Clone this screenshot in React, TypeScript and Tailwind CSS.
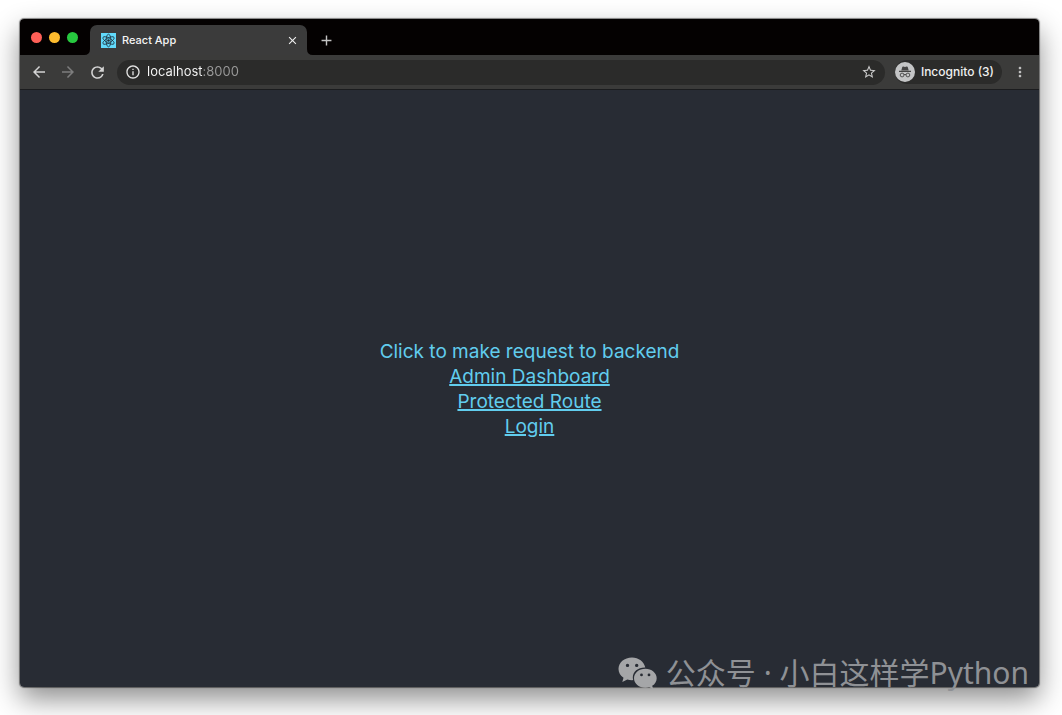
import type { ReactNode } from "react";
import {
  MdAdd,
  MdArrowBack,
  MdArrowForward,
  MdClose,
  MdInfoOutline,
  MdMoreVert,
  MdRefresh,
  MdStarBorder,
} from "react-icons/md";

function ReactFavicon() {
  return (
    <svg viewBox="0 0 32 32" className="size-[15px] shrink-0" aria-hidden="true">
      <rect width="32" height="32" fill="#61dafb" />
      <g fill="none" stroke="#20303c" strokeWidth="1.7">
        <ellipse cx="16" cy="16" rx="13.5" ry="5.2" transform="rotate(30 16 16)" />
        <ellipse cx="16" cy="16" rx="13.5" ry="5.2" transform="rotate(90 16 16)" />
        <ellipse cx="16" cy="16" rx="13.5" ry="5.2" transform="rotate(150 16 16)" />
      </g>
      <circle cx="16" cy="16" r="2.7" fill="#20303c" />
    </svg>
  );
}

function IncognitoIcon() {
  return (
    <svg viewBox="0 0 20 20" className="size-5 shrink-0" aria-hidden="true">
      <circle cx="10" cy="10" r="10" fill="#c4c5c6" />
      <path
        d="M6.3 8.4 7.2 5.2Q7.5 4.4 8.3 4.6L10 5l1.7-.4Q12.5 4.4 12.8 5.2L13.7 8.4Z"
        fill="#444"
      />
      <path d="M4 9.4H16" stroke="#444" strokeWidth="1.1" />
      <g fill="none" stroke="#444" strokeWidth="0.9">
        <circle cx="7.1" cy="13" r="1.9" />
        <circle cx="12.9" cy="13" r="1.9" />
        <path d="M9 12.7Q10 12.1 11 12.7" />
      </g>
    </svg>
  );
}

function WeChatIcon() {
  return (
    <svg viewBox="0 0 40 33" className="h-[33px] w-10 shrink-0" aria-hidden="true">
      <path
        fillRule="evenodd"
        fill="#a5a6a8"
        d="M14 .5C6.3.5.5 5.6.5 12c0 3.6 1.9 6.7 5 8.8L4.3 25l5-2.5c1.5.4 3 .7 4.7.7l1.2-.1A10 10 0 0 1 14.8 20.5C14.8 14.7 20.3 10.3 27.3 10.6 26.1 4.8 20.6.5 14 .5ZM9.500 6.7a1.700 1.700 0 1 1 0 3.4 1.7 1.7 0 0 1 0-3.4Zm9.2 0a1.7 1.7 0 1 1 0 3.4 1.7 1.7 0 0 1 0-3.4Z"
      />
      <path
        fillRule="evenodd"
        fill="#a5a6a8"
        d="M27.3 11.7c-6.3 0-11.3 4.2-11.3 9.5s5 9.5 11.3 9.5c1.4 0 2.7-.2 3.9-.6l4 2.2-1-3.5c2.8-1.7 4.5-4.5 4.5-7.6 0-5.3-5.1-9.5-11.4-9.5Zm-3.8 4.8a1.4 1.4 0 1 1 0 2.8 1.4 1.4 0 0 1 0-2.8Zm7.5 0a1.4 1.4 0 1 1 0 2.8 1.4 1.4 0 0 1 0-2.8Z"
      />
    </svg>
  );
}

function IconButton({ label, className = "", children }: { label: string; className?: string; children: ReactNode }) {
  return (
    <button type="button" aria-label={label} className={`flex shrink-0 items-center justify-center ${className}`}>
      {children}
    </button>
  );
}

function TabStrip() {
  return (
    <div className="flex h-9 items-end bg-[#040101]">
      <div className="flex h-9 items-center gap-[7px] pl-[11px] pr-[6px]">
        <button type="button" aria-label="Close window" className="size-[11px] rounded-full bg-[#fe5f57]" />
        <button type="button" aria-label="Minimize window" className="size-[11px] rounded-full bg-[#febb2e]" />
        <button type="button" aria-label="Zoom window" className="size-[11px] rounded-full bg-[#27c83f]" />
      </div>
      <svg viewBox="0 0 6 6" className="size-[6px]" aria-hidden="true">
        <path d="M6 0v6H0Q6 6 6 0Z" fill="#3b3b3b" />
      </svg>
      <div className="flex h-[30px] w-[217px] items-center rounded-t-[7px] bg-[#3b3b3b] pl-[11px] pr-2">
        <ReactFavicon />
        <span className="ml-[6px] flex-1 text-[11px] font-medium text-[#f4f4f4]">React App</span>
        <IconButton label="Close tab" className="size-[14px] text-[#f0f0f0]">
          <MdClose size={13} />
        </IconButton>
      </div>
      <svg viewBox="0 0 6 6" className="size-[6px]" aria-hidden="true">
        <path d="M0 0v6h6Q0 6 0 0Z" fill="#3b3b3b" />
      </svg>
      <IconButton label="New tab" className="ml-1 h-[30px] w-[18px] text-[#c3c3c3]">
        <MdAdd size={17} />
      </IconButton>
    </div>
  );
}

function Toolbar() {
  return (
    <div className="flex h-[35px] items-center border-b border-[#1b1c1e] bg-[#3b3b3a] pl-[11px] pr-[11px]">
      <div className="flex gap-[13px] text-[#d4d4d4]">
        <IconButton label="Back" className="size-4">
          <MdArrowBack size={18} className="shrink-0" />
        </IconButton>
        <IconButton label="Forward" className="size-4 text-[#7d7d7d]">
          <MdArrowForward size={18} className="shrink-0" />
        </IconButton>
        <IconButton label="Reload" className="size-4">
          <MdRefresh size={19} className="shrink-0" />
        </IconButton>
      </div>
      <div className="ml-3 flex h-[25px] min-w-0 flex-1 items-center rounded-full bg-[#2b2b2a] pl-2 pr-2">
        <IconButton label="View site information" className="size-4 text-[#e4e4e4]">
          <MdInfoOutline size={16} />
        </IconButton>
        <input
          type="text"
          aria-label="Address"
          defaultValue="localhost:8000"
          className="ml-[6px] min-w-0 flex-1 bg-[linear-gradient(to_right,#fafafa_56px,#9b9b9b_56px)] bg-clip-text text-[13px] text-transparent outline-none"
        />
        <IconButton label="Bookmark this tab" className="size-4 text-[#cacaca]">
          <MdStarBorder size={16} />
        </IconButton>
      </div>
      <button
        type="button"
        className="ml-[10px] flex h-6 shrink-0 items-center gap-[6px] rounded-full bg-[#2b2b2a] pr-2 text-[12px] font-medium text-[#f0f0f0]"
      >
        <IncognitoIcon />
        Incognito (3)
      </button>
      <IconButton label="More options" className="ml-[10px] size-4 text-[#c3c3c3]">
        <MdMoreVert size={16} />
      </IconButton>
    </div>
  );
}

export default function App() {
  return (
    <div className="flex min-h-screen flex-col bg-white pt-[19px] pr-[23px] pb-7 pl-5 font-['Inter',sans-serif]">
      <div className="relative flex flex-1 flex-col rounded-[4px] shadow-[0_0_1px_1px_rgba(0,0,0,0.45),0_12px_28px_rgba(0,0,0,0.45)]">
        <header className="overflow-hidden rounded-t-[4px]">
          <TabStrip />
          <Toolbar />
        </header>
        <main className="flex flex-1 flex-col items-center justify-center rounded-b-[4px] bg-[#282c34] text-[19px] leading-[25px] text-[#61cdee]">
          <button type="button">Click to make request to backend</button>
          <a href="#admin" className="underline decoration-2">
            Admin Dashboard
          </a>
          <a href="#protected" className="underline decoration-2">
            Protected Route
          </a>
          <a href="#login" className="underline decoration-2">
            Login
          </a>
        </main>
        <div className="absolute right-[10px] bottom-[-6px] flex items-center gap-2 whitespace-nowrap">
          <WeChatIcon />
          <span className="font-['Noto_Sans','Noto_Sans_CJK_SC',sans-serif] text-[30px] leading-10 text-[#8f9195]">
            公众号 · 小白这样学Python
          </span>
        </div>
      </div>
    </div>
  );
}
